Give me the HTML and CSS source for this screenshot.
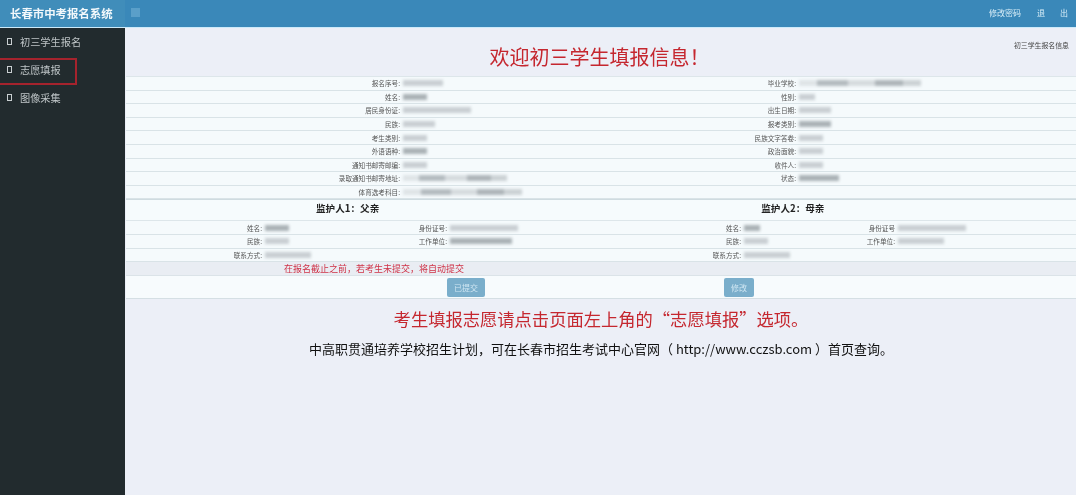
FILE: index.html
```html
<!DOCTYPE html>
<html lang="zh-CN">
<head>
    <meta charset="UTF-8">
    <meta name="viewport" content="width=device-width, initial-scale=1.0">
    <title>长春市中考报名系统</title>
    <link rel="stylesheet" href="styles.css">
</head>
<body>
    <div class="topbar">
        <div class="brand">长春市中考报名系统</div>
        <div class="toggle"></div>
        <div class="top-links">
            <a class="pwd">修改密码</a>
            <a class="logout"><span>退</span><span>出</span></a>
        </div>
    </div>
    <div class="layout">
        <div class="sidebar">
            <div class="menu-item"><span class="box"></span>初三学生报名</div>
            <div class="menu-item marked"><span class="box"></span>志愿填报</div>
            <div class="menu-item"><span class="box"></span>图像采集</div>
        </div>
        <div class="main">
            <div class="page-head">
                <h1 class="welcome">欢迎初三学生填报信息！</h1>
                <div class="crumb">初三学生报名信息</div>
            </div>

            <div class="info">
                <div class="row">
                    <span class="lbl">报名序号:</span><span class="val"><i class="blot w40 pale"></i></span>
                    <span class="lbl">毕业学校:</span><span class="val"><i class="blot w122 patchy"></i></span>
                </div>
                <div class="row">
                    <span class="lbl">姓名:</span><span class="val"><i class="blot w24"></i></span>
                    <span class="lbl">性别:</span><span class="val"><i class="blot w16 pale"></i></span>
                </div>
                <div class="row">
                    <span class="lbl">居民身份证:</span><span class="val"><i class="blot w68 pale"></i></span>
                    <span class="lbl">出生日期:</span><span class="val"><i class="blot w32 pale"></i></span>
                </div>
                <div class="row">
                    <span class="lbl">民族:</span><span class="val"><i class="blot w32 pale"></i></span>
                    <span class="lbl">报考类别:</span><span class="val"><i class="blot w32"></i></span>
                </div>
                <div class="row">
                    <span class="lbl">考生类别:</span><span class="val"><i class="blot w24 pale"></i></span>
                    <span class="lbl">民族文字答卷:</span><span class="val"><i class="blot w24 pale"></i></span>
                </div>
                <div class="row">
                    <span class="lbl">外语语种:</span><span class="val"><i class="blot w24"></i></span>
                    <span class="lbl">政治面貌:</span><span class="val"><i class="blot w24 pale"></i></span>
                </div>
                <div class="row">
                    <span class="lbl">通知书邮寄邮编:</span><span class="val"><i class="blot w24 pale"></i></span>
                    <span class="lbl">收件人:</span><span class="val"><i class="blot w24 pale"></i></span>
                </div>
                <div class="row">
                    <span class="lbl">录取通知书邮寄地址:</span><span class="val"><i class="blot w104 patchy"></i></span>
                    <span class="lbl">状态:</span><span class="val"><i class="blot w40"></i></span>
                </div>
                <div class="row">
                    <span class="lbl">体育选考科目:</span><span class="val"><i class="blot w170 patchy"></i></span>
                    <span class="lbl"></span><span class="val"></span>
                </div>
            </div>

            <div class="guardian-head">
                <b class="g1">监护人1：父亲</b>
                <b class="g2">监护人2：母亲</b>
            </div>

            <div class="guardian">
                <div class="g-row">
                    <span class="lbl">姓名:</span><span class="val"><i class="blot w24"></i></span>
                    <span class="lbl">身份证号:</span><span class="val"><i class="blot w68 pale"></i></span>
                    <span class="lbl">姓名:</span><span class="val"><i class="blot w16"></i></span>
                    <span class="lbl">身份证号</span><span class="val"><i class="blot w68 pale"></i></span>
                </div>
                <div class="g-row">
                    <span class="lbl">民族:</span><span class="val"><i class="blot w24 pale"></i></span>
                    <span class="lbl">工作单位:</span><span class="val"><i class="blot w62"></i></span>
                    <span class="lbl">民族:</span><span class="val"><i class="blot w24 pale"></i></span>
                    <span class="lbl">工作单位:</span><span class="val"><i class="blot w46 pale"></i></span>
                </div>
                <div class="g-row">
                    <span class="lbl">联系方式:</span><span class="val"><i class="blot w46 pale"></i></span>
                    <span></span><span></span>
                    <span class="lbl">联系方式:</span><span class="val"><i class="blot w46 pale"></i></span>
                    <span></span><span></span>
                </div>
            </div>

            <div class="notice"><span>在报名截止之前，若考生未提交，将自动提交</span></div>

            <div class="actions">
                <button class="btn submitted">已提交</button>
                <button class="btn edit">修改</button>
            </div>

            <p class="hint">考生填报志愿请点击页面左上角的“志愿填报”选项。</p>
            <p class="plan">中高职贯通培养学校招生计划，可在长春市招生考试中心官网（ http://www.cczsb.com ）首页查询。</p>
        </div>
    </div>
</body>
</html>
```

FILE: styles.css
```css
html, body {
    height: 100%;
}
body {
    margin: 0;
    height: 495px;
    overflow: hidden;
    display: flex;
    flex-direction: column;
    font-family: "Noto Sans CJK SC", "Liberation Sans", sans-serif;
    background-color: #eceff7;
    color: #333;
    filter: blur(0.3px);
}

.topbar {
    height: 28px;
    flex: none;
    display: flex;
    align-items: center;
    background-color: #3a88b9;
    border-bottom: 1px solid #cdeafa;
    box-sizing: border-box;
}
.brand {
    width: 125px;
    box-sizing: border-box;
    padding-left: 10px;
    height: 100%;
    line-height: 27px;
    font-size: 11.4px;
    font-weight: 700;
    color: #f2f8fb;
    white-space: nowrap;
    background-color: #408dba;
}
.toggle {
    width: 9px;
    height: 9px;
    margin-left: 6px;
    margin-bottom: 2px;
    background-color: #5a9fc9;
}
.top-links {
    margin-left: auto;
    display: flex;
    font-size: 8px;
    color: #d8eef8;
    margin-bottom: 3px;
}
.pwd {
    margin-right: 16px;
}
.logout {
    width: 31px;
    margin-right: 8px;
    display: flex;
    justify-content: space-between;
}

.layout {
    flex: 1;
    display: flex;
    min-height: 0;
}
.sidebar {
    width: 125px;
    flex: none;
    background-color: #222b2e;
    color: #bfc5c7;
    font-size: 10.2px;
}
.menu-item {
    height: 28px;
    box-sizing: border-box;
    display: flex;
    align-items: center;
    padding-left: 7px;
    padding-bottom: 2px;
    white-space: nowrap;
}
.box {
    width: 3px;
    height: 5px;
    margin-right: 8px;
    border: 1px solid #c9cfd1;
}
.marked {
    position: relative;
}
.marked::after {
    content: "";
    position: absolute;
    left: -2px;
    top: 2px;
    width: 75px;
    height: 23px;
    border: 2px solid #a5232d;
}

.main {
    flex: 1;
    min-width: 0;
    padding-left: 1px;
}
.page-head {
    display: grid;
    height: 48px;
}
.welcome {
    grid-area: 1 / 1;
    margin: 0;
    padding: 14px 3px 0 0;
    text-align: center;
    font-size: 20px;
    line-height: 29px;
    font-weight: 400;
    color: #c5272f;
}
.crumb {
    grid-area: 1 / 1;
    justify-self: end;
    margin: 12px 7px 0 0;
    font-size: 6.9px;
    line-height: 10px;
    color: #444;
}

.info, .guardian {
    background-color: #f5fafc;
    border-top: 1px solid #dde6ea;
}
.row, .g-row {
    display: grid;
    height: 13.6px;
    box-sizing: border-box;
    align-items: center;
    border-bottom: 1px solid #d9e3e7;
    font-size: 6.6px;
    line-height: 12px;
    color: #555;
}
.row {
    grid-template-columns: 274px 122px 274px 1fr;
}
.g-row {
    grid-template-columns: 136px 60px 125px 134px 160px 60px 94px 1fr;
}
.lbl {
    text-align: right;
    white-space: nowrap;
}
.val {
    display: flex;
    padding-left: 3px;
}

.blot {
    display: block;
    height: 6px;
    background-color: #aab2b6;
    filter: blur(1.6px);
}
.pale { background-color: #c9cfd3; }
.patchy {
    background-image: linear-gradient(90deg, #dfe4e7 0 15%, #b4bbbf 15% 40%, #d6dbde 40% 62%, #aeb5b9 62% 85%, #ccd2d5 85%);
}
.w16 { width: 16px; }
.w24 { width: 24px; }
.w32 { width: 32px; }
.w40 { width: 40px; }
.w46 { width: 46px; }
.w62 { width: 62px; }
.w68 { width: 68px; }
.w104 { width: 104px; }
.w122 { width: 122px; }
.w170 { width: 170px; }

.guardian-head {
    height: 21px;
    box-sizing: border-box;
    padding-bottom: 5px;
    display: flex;
    align-items: center;
    background-color: #f6fbfd;
    font-size: 9.6px;
    color: #222;
    border-top: 1px solid #cfdbe0;
}
.guardian-head b {
    white-space: nowrap;
}
.g1 { margin-left: 190px; }
.g2 { margin-left: 382px; }

.notice {
    height: 14px;
    line-height: 13px;
    padding-left: 158px;
    background-color: #e9edf3;
    border-bottom: 1px solid #dbe3e8;
    box-sizing: border-box;
    font-size: 9px;
    color: #cf3146;
}
.actions {
    height: 23px;
    box-sizing: border-box;
    display: flex;
    align-items: center;
    background-color: #f7fbfd;
    border-bottom: 1px solid #d5dfe4;
}
.btn {
    height: 19px;
    padding: 0;
    border: none;
    border-radius: 2px;
    background-color: #7aaecb;
    color: #cfe6f2;
    font-family: inherit;
    font-size: 8px;
}
.submitted {
    width: 38px;
    margin-left: 321px;
}
.edit {
    width: 30px;
    margin-left: 239px;
}

.hint {
    margin: 7px 0 0;
    text-align: center;
    font-size: 17.3px;
    line-height: 26px;
    color: #c5272f;
}
.plan {
    margin: 7px 0 0;
    text-align: center;
    font-size: 13px;
    line-height: 20px;
    color: #111;
}
```
